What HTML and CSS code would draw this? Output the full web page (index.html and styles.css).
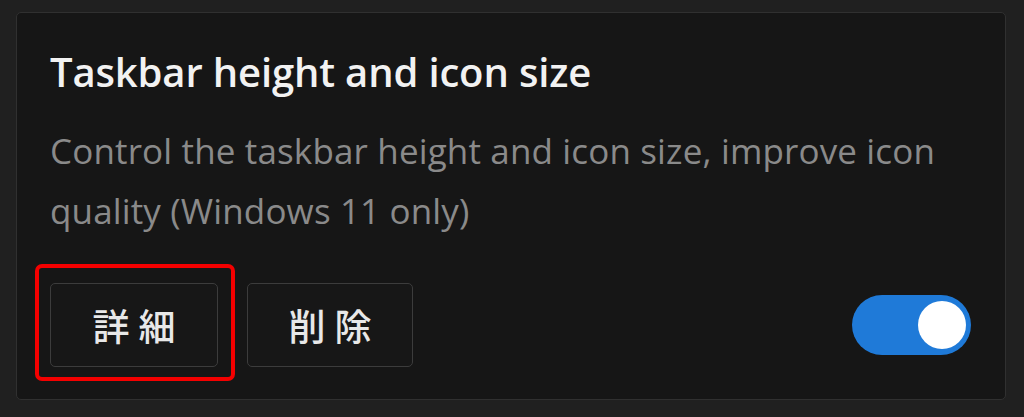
FILE: index.html
```html
<!DOCTYPE html>
<html lang="ja">
<head>
    <meta charset="UTF-8">
    <meta name="viewport" content="width=device-width, initial-scale=1.0">
    <title>Taskbar height and icon size</title>
    <link rel="stylesheet" href="styles.css">
</head>
<body>
    <!-- Карточка мода -->
    <div class="mod-card">
        <h2 class="mod-title">Taskbar height and icon size</h2>
        <p class="mod-desc">Control the taskbar height and icon size, improve icon quality (Windows 11 only)</p>

        <div class="mod-footer">
            <div class="buttons">
                <button class="btn btn-details">詳細<span class="highlight"></span></button>
                <button class="btn">削除</button>
            </div>
            <div class="toggle on"><div class="knob"></div></div>
        </div>
    </div>
</body>
</html>
```

FILE: styles.css
```css
body {
    margin: 0;
    padding: 12px 18px 17px 16px;
    background: #202020;
    font-family: "Open Sans", "Noto Sans CJK JP", sans-serif;
    overflow: hidden;
}

.mod-card {
    background: #161616;
    border: 1px solid #303030;
    border-radius: 5px;
    padding: 35px 33px 32px 33px;
}

.mod-title {
    margin: 0;
    color: #f2f2f2;
    font-size: 40px;
    font-weight: 600;
    line-height: 48px;
    letter-spacing: -0.15px;
}

.mod-desc {
    margin: 25px 0 0 0;
    color: #8a8a8a;
    font-size: 35px;
    line-height: 60px;
    letter-spacing: 0.15px;
}

.mod-footer {
    margin-top: 42px;
    display: flex;
    align-items: center;
    justify-content: space-between;
}

.buttons {
    display: flex;
    gap: 29px;
}

.btn {
    position: relative;
    width: 168px;
    height: 84px;
    background: #171717;
    border: 1px solid #3c3c3c;
    border-radius: 5px;
    color: #e8e8e8;
    font-family: "Noto Sans CJK JP", sans-serif;
    font-size: 37px;
    font-weight: 500;
    letter-spacing: 9px;
    padding: 0 0 0 9px;
}

.btn + .btn {
    width: 166px;
}

/* Красная рамка поверх кнопки */
.highlight {
    position: absolute;
    top: -20px;
    left: -16px;
    right: -18px;
    bottom: -15px;
    border: 4px solid #f40000;
    border-radius: 7px;
}

.toggle {
    width: 119px;
    height: 60px;
    border-radius: 30px;
    background: #1f7ad8;
    display: flex;
    align-items: center;
    justify-content: flex-end;
    padding: 0 5px;
    box-sizing: border-box;
    margin-right: 1px;
}

.knob {
    width: 48px;
    height: 48px;
    border-radius: 50%;
    background: #ffffff;
}
```
